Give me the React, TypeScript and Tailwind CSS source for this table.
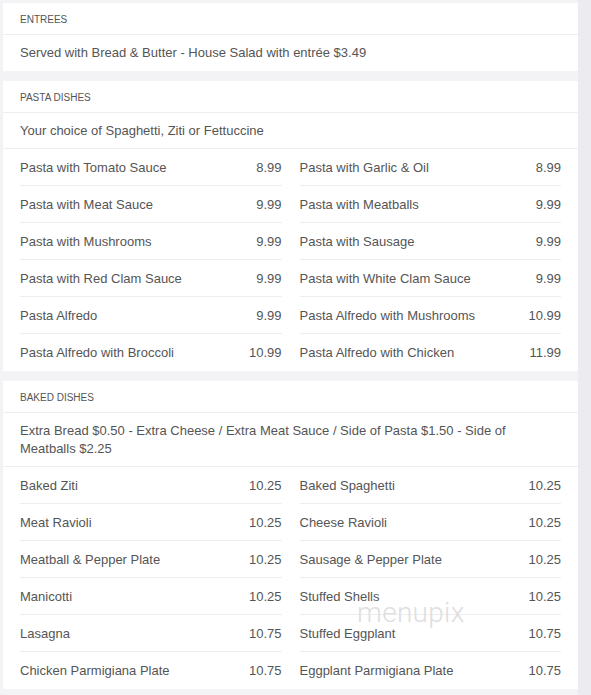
import React from "react";

type Item = [string, string];

const pasta: Item[] = [
  ["Pasta with Tomato Sauce", "8.99"],
  ["Pasta with Garlic & Oil", "8.99"],
  ["Pasta with Meat Sauce", "9.99"],
  ["Pasta with Meatballs", "9.99"],
  ["Pasta with Mushrooms", "9.99"],
  ["Pasta with Sausage", "9.99"],
  ["Pasta with Red Clam Sauce", "9.99"],
  ["Pasta with White Clam Sauce", "9.99"],
  ["Pasta Alfredo", "9.99"],
  ["Pasta Alfredo with Mushrooms", "10.99"],
  ["Pasta Alfredo with Broccoli", "10.99"],
  ["Pasta Alfredo with Chicken", "11.99"],
];

const baked: Item[] = [
  ["Baked Ziti", "10.25"],
  ["Baked Spaghetti", "10.25"],
  ["Meat Ravioli", "10.25"],
  ["Cheese Ravioli", "10.25"],
  ["Meatball & Pepper Plate", "10.25"],
  ["Sausage & Pepper Plate", "10.25"],
  ["Manicotti", "10.25"],
  ["Stuffed Shells", "10.25"],
  ["Lasagna", "10.75"],
  ["Stuffed Eggplant", "10.75"],
  ["Chicken Parmigiana Plate", "10.75"],
  ["Eggplant Parmigiana Plate", "10.75"],
];

function Header({ title }: { title: string }) {
  return (
    <div className="h-[32px] pt-[1px] border-b border-[#eeeeee] px-[17px] flex items-center text-[10px] text-[#555] uppercase">
      {title}
    </div>
  );
}

function Desc({ children, last }: { children: React.ReactNode; last?: boolean }) {
  return (
    <div
      className={
        "px-[17px] pt-[9px] text-[13px] leading-[18px] text-[#555] " +
        (last ? "pb-[9px]" : "pb-[8px] border-b border-[#eeeeee]")
      }
    >
      {children}
    </div>
  );
}

function Grid({ items }: { items: Item[] }) {
  const n = items.length;
  return (
    <div className="grid grid-cols-2 gap-x-[18px] px-[17px]">
      {items.map(([name, price], i) => (
        <div
          key={name}
          className={
            "h-[37px] pt-[1px] flex items-center justify-between text-[13px] text-[#555] " +
            (i < n - 2 ? "border-b border-[#eeeeee]" : "")
          }
        >
          <span>{name}</span>
          <span>{price}</span>
        </div>
      ))}
    </div>
  );
}

export default function App() {
  return (
    <div
      className="w-[591px] h-[695px] overflow-hidden flex bg-[#f3f3f5]"
      style={{ fontFamily: "'Liberation Sans', Arial, sans-serif" }}
    >
      <div className="w-[578px] pl-[3px] pt-[3px] flex flex-col gap-[10px] relative">
        <div className="bg-white">
          <Header title="Entrees" />
          <Desc last>Served with Bread &amp; Butter - House Salad with entrée $3.49</Desc>
        </div>
        <div className="bg-white">
          <Header title="Pasta Dishes" />
          <Desc>Your choice of Spaghetti, Ziti or Fettuccine</Desc>
          <Grid items={pasta} />
        </div>
        <div className="bg-white">
          <Header title="Baked Dishes" />
          <Desc>
            Extra Bread $0.50 - Extra Cheese / Extra Meat Sauce / Side of Pasta $1.50 - Side of Meatballs $2.25
          </Desc>
          <Grid items={baked} />
        </div>
        <div
          className="absolute left-[357px] top-[598px] text-[28px] leading-[30px] text-[#dedede] tracking-[0.3px] pointer-events-none"
          style={{ fontFamily: "Roboto, sans-serif", fontWeight: 300 }}
        >
          menupix
        </div>
      </div>
      <div className="flex-1 bg-[#ebebf0]" />
    </div>
  );
}
